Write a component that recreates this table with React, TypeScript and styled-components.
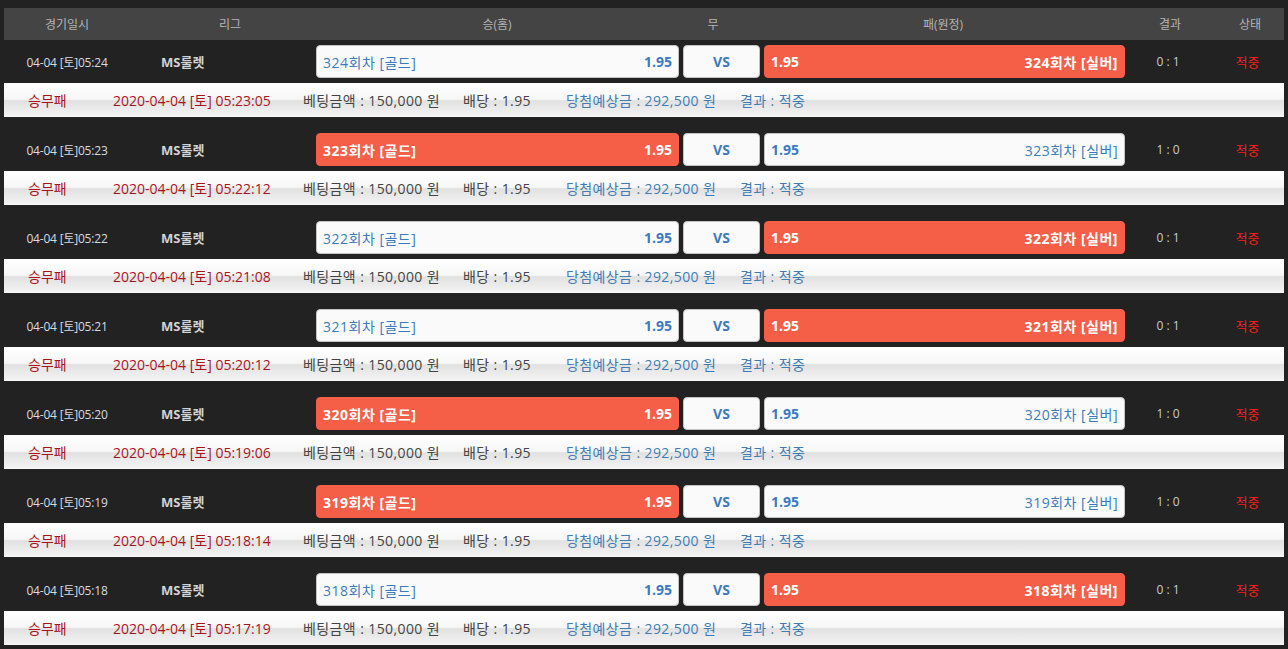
import styled, { createGlobalStyle } from 'styled-components';

const GlobalStyle = createGlobalStyle`
  html, body {
    margin: 0;
    padding: 0;
    background: #222222;
  }
  body {
    font-family: "Open Sans", "Noto Sans CJK KR", sans-serif;
  }
`;

type Game = {
  time: string;
  round: number;
  winner: 'home' | 'away';
  score: string;
  betAt: string;
};

const games: Game[] = [
  { time: '05:24', round: 324, winner: 'away', score: '0 : 1', betAt: '05:23:05' },
  { time: '05:23', round: 323, winner: 'home', score: '1 : 0', betAt: '05:22:12' },
  { time: '05:22', round: 322, winner: 'away', score: '0 : 1', betAt: '05:21:08' },
  { time: '05:21', round: 321, winner: 'away', score: '0 : 1', betAt: '05:20:12' },
  { time: '05:20', round: 320, winner: 'home', score: '1 : 0', betAt: '05:19:06' },
  { time: '05:19', round: 319, winner: 'home', score: '1 : 0', betAt: '05:18:14' },
  { time: '05:18', round: 318, winner: 'away', score: '0 : 1', betAt: '05:17:19' },
];

const Page = styled.div`
  padding: 8px 4px 0;
  width: 1280px;
`;

const HeaderRow = styled.div`
  display: grid;
  grid-template-columns: 126px 200px 334px 98px 362px 92px 1fr;
  height: 32px;
  align-items: center;
  background: #444444;
`;

const HeadCell = styled.div`
  text-align: center;
  color: #b4b4b4;
  font-size: 12px;
`;

const Group = styled.div`
  margin-bottom: 11px;
`;

const GameRow = styled.div`
  display: grid;
  grid-template-columns: 126px 186px 363px 81px 365px 86px 1fr;
  height: 43px;
  align-items: center;
  background: #222222;
`;

const DateCell = styled.div`
  text-align: center;
  color: #d6dbe0;
  font-size: 12px;
  letter-spacing: -0.2px;
`;

const League = styled.div`
  padding-left: 31px;
  color: #d2d2d2;
  font-size: 13px;
  font-weight: 700;
`;

const BetCell = styled.div<{ $offset?: number }>`
  padding-left: ${(p) => p.$offset ?? 0}px;
  height: 33px;
`;

const BetButton = styled.div<{ $on?: boolean; $center?: boolean }>`
  box-sizing: border-box;
  height: 33px;
  display: flex;
  align-items: center;
  justify-content: ${(p) => (p.$center ? 'center' : 'space-between')};
  padding: 0 6px;
  border-radius: 4px;
  border: 1px solid ${(p) => (p.$on ? '#f55f47' : '#c4c4c4')};
  background: ${(p) => (p.$on ? '#f55f47' : '#fafafa')};
  color: ${(p) => (p.$on ? '#ffffff' : '#3a7bbf')};
  font-size: 14px;
`;

const Label = styled.span<{ $bold?: boolean }>`
  font-weight: ${(p) => (p.$bold ? 700 : 400)};
  letter-spacing: 0.5px;
`;

const Odds = styled.span`
  font-weight: 700;
`;

const Score = styled.div`
  text-align: center;
  color: #c8ccd2;
  font-size: 12px;
`;

const Status = styled.div`
  text-align: center;
  color: #ff1a1a;
  font-size: 13px;
`;

const DetailRow = styled.div`
  display: flex;
  align-items: center;
  height: 34px;
  padding-left: 24px;
  background: linear-gradient(to bottom, #ffffff 0%, #f7f7f7 48%, #e1e1e1 52%, #f4f4f4 100%);
  font-size: 14px;
`;

const Item = styled.span<{ $w?: number; $tone: 'red' | 'grey' | 'blue' }>`
  width: ${(p) => (p.$w ? `${p.$w}px` : 'auto')};
  flex-shrink: 0;
  white-space: nowrap;
  letter-spacing: ${(p) => (p.$tone === 'red' ? 0 : 0.4)}px;
  color: ${(p) => (p.$tone === 'red' ? '#a8141c' : p.$tone === 'blue' ? '#3f7cb8' : '#454545')};
`;

const App = () => {
  return (
    <>
      <GlobalStyle />
      <Page>
        <HeaderRow>
          <HeadCell>경기일시</HeadCell>
          <HeadCell>리그</HeadCell>
          <HeadCell>승(홈)</HeadCell>
          <HeadCell>무</HeadCell>
          <HeadCell>패(원정)</HeadCell>
          <HeadCell>결과</HeadCell>
          <HeadCell>상태</HeadCell>
        </HeaderRow>

        {games.map((g) => {
          const homeOn = g.winner === 'home';
          const awayOn = g.winner === 'away';
          return (
            <Group key={g.round}>
              <GameRow>
                <DateCell>04-04 [토]{g.time}</DateCell>
                <League>MS룰렛</League>
                <BetCell>
                  <BetButton $on={homeOn}>
                    <Label $bold={homeOn}>{g.round}회차 [골드]</Label>
                    <Odds>1.95</Odds>
                  </BetButton>
                </BetCell>
                <BetCell $offset={4}>
                  <BetButton $center>
                    <Odds>VS</Odds>
                  </BetButton>
                </BetCell>
                <BetCell $offset={4}>
                  <BetButton $on={awayOn}>
                    <Odds>1.95</Odds>
                    <Label $bold={awayOn}>{g.round}회차 [실버]</Label>
                  </BetButton>
                </BetCell>
                <Score>{g.score}</Score>
                <Status>적중</Status>
              </GameRow>
              <DetailRow>
                <Item $w={85} $tone="red">승무패</Item>
                <Item $w={190} $tone="red">2020-04-04 [토] {g.betAt}</Item>
                <Item $w={160} $tone="grey">베팅금액 : 150,000 원</Item>
                <Item $w={103} $tone="grey">배당 : 1.95</Item>
                <Item $w={174} $tone="blue">당첨예상금 : 292,500 원</Item>
                <Item $tone="blue">결과 : 적중</Item>
              </DetailRow>
            </Group>
          );
        })}
      </Page>
    </>
  );
};

export default App;
